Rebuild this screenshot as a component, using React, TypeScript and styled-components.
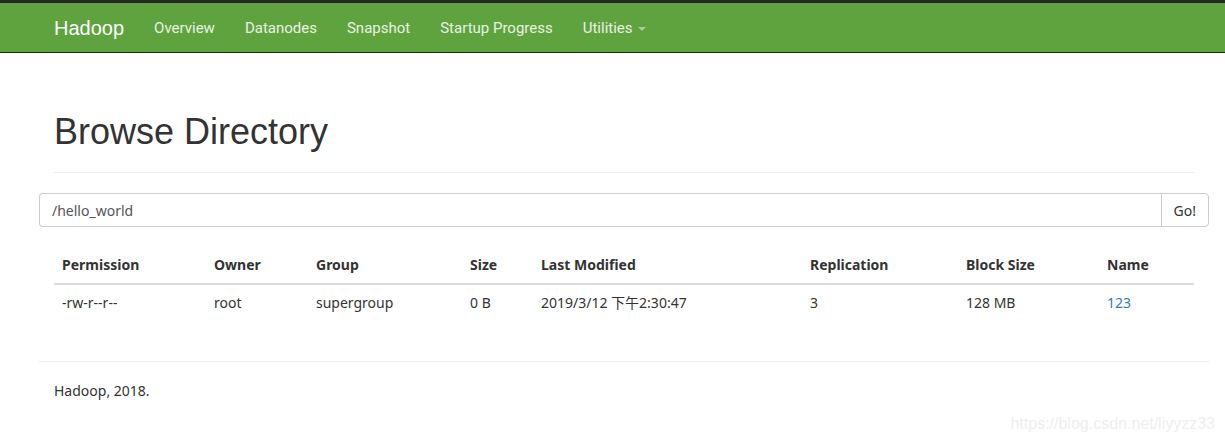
import styled, {createGlobalStyle} from "styled-components";

const GlobalStyle = createGlobalStyle`
  html, body {
    margin: 0;
    padding: 0;
    background: #FFFFFF;
  }
  body {
    font-family: "Noto Sans", "Open Sans", "Noto Sans CJK SC", sans-serif;
    font-size: 14px;
    line-height: 20px;
    color: #333333;
  }
`

const Navbar = styled.nav`
  height: 49px;
  background: #5fa33e;
  border-top: 3px solid #262626;
  border-bottom: 1px solid #1d2a16;
  display: flex;
  align-items: center;
  padding-left: 54px;
`

const Brand = styled.a`
  font-family: "Liberation Sans", Arial, sans-serif;
  font-size: 20px;
  color: #FFFFFF;
  margin-right: 15px;
  text-decoration: none;
`

const NavItem = styled.a`
  font-family: Roboto, "Liberation Sans", sans-serif;
  font-size: 15px;
  color: #e9f2e3;
  padding: 0 15px;
  text-decoration: none;
  display: flex;
  align-items: center;
`

const Caret = styled.span`
  display: inline-block;
  margin-left: 5px;
  margin-top: 2px;
  border-left: 4px solid transparent;
  border-right: 4px solid transparent;
  border-top: 4px solid #a9cc97;
`

const Container = styled.div`
  width: 1140px;
  padding: 0 31px 0 54px;
  position: relative;
`

const PageHeader = styled.div`
  margin-top: 59px;
  padding-bottom: 20px;
  border-bottom: 1px solid #eeeeee;
`

const Title = styled.h1`
  margin: 0;
  font-family: "Liberation Sans", Arial, sans-serif;
  font-size: 36px;
  line-height: 40px;
  font-weight: normal;
  color: #333333;
`

const InputGroup = styled.div`
  display: flex;
  margin: 20px -15px 0;
  height: 34px;
`

const PathInput = styled.input`
  flex: 1;
  box-sizing: border-box;
  height: 34px;
  border: 1px solid #cccccc;
  border-right: none;
  border-radius: 4px 0 0 4px;
  padding: 0 12px;
  font-family: "Noto Sans", sans-serif;
  font-size: 14px;
  color: #555555;
  outline: none;
`

const GoButton = styled.button`
  box-sizing: border-box;
  height: 34px;
  border: 1px solid #cccccc;
  border-radius: 0 4px 4px 0;
  background: #FFFFFF;
  padding: 0 12px;
  font-family: "Noto Sans", sans-serif;
  font-size: 14px;
  color: #333333;
`

const Table = styled.table`
  width: 1140px;
  margin-top: 22px;
  border-collapse: collapse;
  table-layout: fixed;
`

const HeadCell = styled.th`
  text-align: left;
  font-weight: bold;
  padding: 6px 8px 8px;
  border-bottom: 2px solid #dddddd;
`

const Cell = styled.td<{ $link?: boolean }>`
  padding: 8px;
  color: ${p => p.$link ? "#337ab7" : "#333333"};
`

const Footer = styled.div`
  margin: 40px -15px 0;
  border-top: 1px solid #eeeeee;
  padding: 19px 15px;
`

const Watermark = styled.div`
  position: absolute;
  right: 10px;
  bottom: 6px;
  font-family: "Liberation Sans", Arial, sans-serif;
  font-size: 16px;
  color: #eeeeee;
`

const columns = [
    {title: "Permission", width: 152, value: "-rw-r--r--"},
    {title: "Owner", width: 102, value: "root"},
    {title: "Group", width: 154, value: "supergroup"},
    {title: "Size", width: 71, value: "0 B"},
    {title: "Last Modified", width: 269, value: "2019/3/12 下午2:30:47"},
    {title: "Replication", width: 156, value: "3"},
    {title: "Block Size", width: 141, value: "128 MB"},
    {title: "Name", width: 95, value: "123"},
]

function App() {
    return <>
        <GlobalStyle/>
        <Navbar>
            <Brand>Hadoop</Brand>
            <NavItem>Overview</NavItem>
            <NavItem>Datanodes</NavItem>
            <NavItem>Snapshot</NavItem>
            <NavItem>Startup Progress</NavItem>
            <NavItem>Utilities<Caret/></NavItem>
        </Navbar>
        <Container>
            <PageHeader>
                <Title>Browse Directory</Title>
            </PageHeader>
            <InputGroup>
                <PathInput defaultValue="/hello_world"/>
                <GoButton>Go!</GoButton>
            </InputGroup>
            <Table>
                <colgroup>
                    {columns.map(c => <col key={c.title} style={{width: c.width}}/>)}
                </colgroup>
                <thead>
                <tr>
                    {columns.map(c => <HeadCell key={c.title}>{c.title}</HeadCell>)}
                </tr>
                </thead>
                <tbody>
                <tr>
                    {columns.map(c => <Cell key={c.title} $link={c.title === "Name"}>{c.value}</Cell>)}
                </tr>
                </tbody>
            </Table>
            <Footer>Hadoop, 2018.</Footer>
        </Container>
        <Watermark>https://blog.csdn.net/liyyzz33</Watermark>
    </>
}

export default App
